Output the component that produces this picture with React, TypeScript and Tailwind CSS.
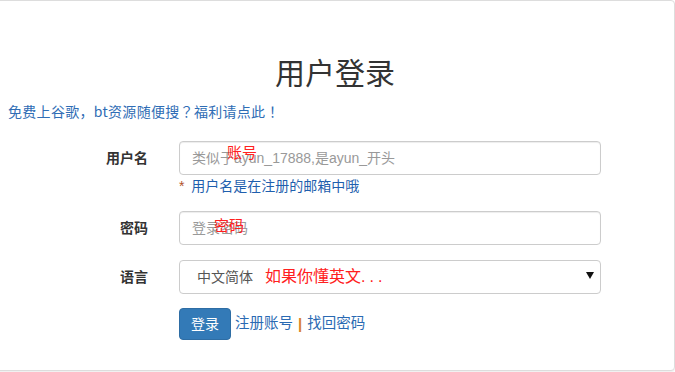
import React from "react";

const font = { fontFamily: '"Liberation Sans", "Noto Sans CJK SC", sans-serif' };
const cjk = { fontFamily: '"Noto Sans CJK SC", "Liberation Sans", sans-serif' };
const tc = { fontFamily: '"Noto Sans CJK TC", sans-serif' };

export default function App() {
  return (
    <div className="w-[675px] h-[372px] bg-white overflow-hidden" style={font}>
      <div className="ml-[-5px] w-[680px] h-[371px] bg-white border border-[#dddddd] rounded-[4px] shadow-[0_1px_2px_rgba(0,0,0,0.08)]">
        <h2 className="pt-[56px] h-[90px] text-center text-[30px] leading-[34px] text-[#333333] font-normal">
          用户登录
        </h2>
        <div className="pl-[12px] mt-[10px] h-[20px] text-[14px] leading-[20px] tracking-[0.3px] text-[#2f6db5]" style={cjk}>
          免费上谷歌，bt资源随便搜<span style={tc}>？</span>福利请点此<span style={tc}>！</span>
        </div>

        <div className="mt-[20px] flex flex-col">
          {/* username */}
          <div className="flex items-center h-[34px]">
            <div className="w-[152px] text-right text-[14px] font-bold text-[#333333]">用户名</div>
            <div className="relative ml-[31px] w-[422px] h-[34px] border border-[#cccccc] rounded-[4px] shadow-[inset_0_1px_1px_rgba(0,0,0,0.075)] flex items-center pl-[12px]">
              <span className="text-[14px] text-[#999999]">类似于ayun_17888,是ayun_开头</span>
              <span className="absolute left-[47px] top-[2px] text-[15px] leading-[18px] text-[#ff2020]">账号</span>
            </div>
          </div>
          <div className="flex h-[36px] items-start pt-[1px]">
            <div className="w-[152px]" />
            <div className="ml-[31px] text-[14px] leading-[20px] text-[#1f5fae]">
              <span className="text-[#b0532a] mr-[3px]">*</span> 用户名是在注册的邮箱中哦
            </div>
          </div>

          {/* password */}
          <div className="flex items-center h-[34px]">
            <div className="w-[152px] text-right text-[14px] font-bold text-[#333333]">密码</div>
            <div className="relative ml-[31px] w-[422px] h-[34px] border border-[#cccccc] rounded-[4px] shadow-[inset_0_1px_1px_rgba(0,0,0,0.075)] flex items-center pl-[12px]">
              <span className="text-[14px] text-[#999999]">登录密码</span>
              <span className="absolute left-[34px] top-[5px] text-[15px] leading-[18px] text-[#ff2020]">密码</span>
            </div>
          </div>

          {/* language */}
          <div className="flex items-center h-[34px] mt-[15px]">
            <div className="w-[152px] text-right text-[14px] font-bold text-[#333333]">语言</div>
            <div className="relative ml-[31px] w-[422px] h-[34px] border border-[#cccccc] rounded-[4px] flex items-center pl-[17px]">
              <span className="text-[14px] text-[#555555]">中文简体</span>
              <span className="ml-[12px] text-[16px] text-[#ff2020]">
                如果你懂英文<span className="tracking-[4px]">...</span>
              </span>
              <svg className="absolute right-[6px] top-[11px]" width="8" height="7" viewBox="0 0 8 7">
                <path d="M0 0 L8 0 L4 7 Z" fill="#111111" />
              </svg>
            </div>
          </div>

          {/* buttons */}
          <div className="flex items-center mt-[14px] h-[32px]">
            <div className="w-[152px]" />
            <button className="ml-[31px] w-[52px] h-[32px] bg-[#337ab7] border border-[#2e6da4] rounded-[4px] text-white text-[14px]">
              登录
            </button>
            <span className="ml-[4px] text-[14.5px] text-[#2a6ab3]">注册账号</span>
            <span className="mx-[5px] text-[15px] font-bold text-[#d9822b]">|</span>
            <span className="text-[14.5px] text-[#2a6ab3]">找回密码</span>
          </div>
        </div>
      </div>
    </div>
  );
}
